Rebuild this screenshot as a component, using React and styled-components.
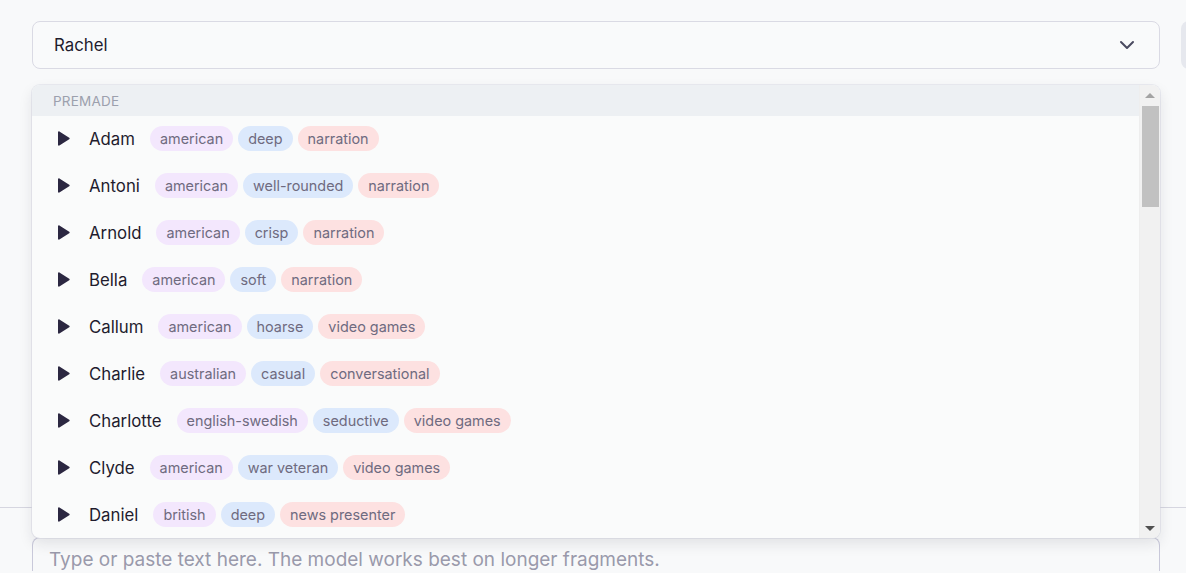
import React from 'react';
import styled, { createGlobalStyle } from 'styled-components';

const voices = [
  { name: 'Adam', tags: ['american', 'deep', 'narration'] },
  { name: 'Antoni', tags: ['american', 'well-rounded', 'narration'] },
  { name: 'Arnold', tags: ['american', 'crisp', 'narration'] },
  { name: 'Bella', tags: ['american', 'soft', 'narration'] },
  { name: 'Callum', tags: ['american', 'hoarse', 'video games'] },
  { name: 'Charlie', tags: ['australian', 'casual', 'conversational'] },
  { name: 'Charlotte', tags: ['english-swedish', 'seductive', 'video games'] },
  { name: 'Clyde', tags: ['american', 'war veteran', 'video games'] },
  { name: 'Daniel', tags: ['british', 'deep', 'news presenter'] },
  { name: 'Dave', tags: ['british-essex', 'conversational', 'video games'] },
];

const tagTones = ['accent', 'trait', 'use'];

const Global = createGlobalStyle`
  html, body { margin: 0; padding: 0; }
  body {
    background: #f8f9fa;
    font-family: Inter, "Noto Sans", sans-serif;
    color: #1f1c2e;
    overflow: hidden;
  }
`;

const Page = styled.div`
  position: relative;
  width: 1186px;
  height: 573px;
  overflow: hidden;
`;

const TopRow = styled.div`
  display: flex;
  gap: 21px;
  padding: 21px 0 0 32px;
`;

const Select = styled.div`
  flex: 0 0 1128px;
  box-sizing: border-box;
  height: 48px;
  display: flex;
  align-items: center;
  justify-content: space-between;
  padding: 0 24px 0 21px;
  border: 1px solid #dadae4;
  border-radius: 8px;
  background: #f9fafb;
  font-size: 16.8px;
  color: #1f1c2e;
`;

const SideButton = styled.div`
  flex: 0 0 60px;
  height: 48px;
  border-radius: 8px;
  background: #e6e8ee;
`;

const Settings = styled.div`
  height: 438px;
`;

const Divider = styled.div`
  border-top: 1px solid #d6d6e0;
`;

const Editor = styled.div`
  margin: 29px 0 0 32px;
  width: 1128px;
  box-sizing: border-box;
  height: 34px;
  padding: 10px 16px 0;
  border: 1px solid #c9c9da;
  border-bottom: none;
  border-radius: 8px 8px 0 0;
  font-size: 19px;
  line-height: 23px;
  color: #9a9aab;
  white-space: nowrap;
`;

const Menu = styled.div`
  position: absolute;
  top: 85px;
  left: 32px;
  width: 1128px;
  height: 453px;
  display: flex;
  border-radius: 8px;
  overflow: hidden;
  background: #fafbfb;
  box-shadow: 0 6px 14px rgba(30, 30, 50, 0.10), 0 0 0 1px rgba(220, 222, 232, 0.5);
`;

const List = styled.div`
  flex: 1;
  display: flex;
  flex-direction: column;
  overflow: hidden;
`;

const GroupLabel = styled.div`
  flex: 0 0 31px;
  display: flex;
  align-items: center;
  padding-left: 21px;
  background: #edf0f3;
  font-size: 13.5px;
  letter-spacing: 0.2px;
  color: #9ca0ad;
  text-transform: uppercase;
`;

const Row = styled.div`
  flex: 0 0 47px;
  display: flex;
  align-items: center;
  padding-left: 25px;
  margin-top: -1px;
  margin-bottom: 1px;
`;

const Play = styled.svg`
  width: 13px;
  height: 15px;
  margin-right: 19px;
  flex-shrink: 0;
`;

const Name = styled.span`
  font-size: 16.8px;
  color: #1f1c2e;
  margin-right: 15px;
`;

const Tags = styled.div`
  display: flex;
  gap: 5px;
`;

const pillColors = {
  accent: '#f3e7fd',
  trait: '#dce9fc',
  use: '#fde1e1',
};

const Pill = styled.span`
  height: 25px;
  display: inline-flex;
  align-items: center;
  padding: 0 10px;
  border-radius: 13px;
  font-size: 14.4px;
  color: #6f6b80;
  background: ${(p) => pillColors[p.$tone]};
`;

const Scrollbar = styled.div`
  flex: 0 0 20px;
  display: flex;
  flex-direction: column;
  align-items: center;
  background: #f1f1f1;
  border-left: 1px solid #eeeeee;
`;

const Arrow = styled.div`
  flex: 0 0 20px;
  display: flex;
  align-items: center;
  justify-content: center;
  &::before {
    content: '';
    border-left: 5px solid transparent;
    border-right: 5px solid transparent;
    ${(p) => (p.$down
      ? 'border-top: 5px solid #505050;'
      : 'border-bottom: 5px solid #a3a3a3;')}
  }
`;

const Track = styled.div`
  flex: 1;
  width: 100%;
  display: flex;
  justify-content: center;
`;

const Thumb = styled.div`
  width: 17px;
  height: 101px;
  margin-top: 1px;
  background: #c1c1c1;
`;

const Chevron = () => (
  <svg width="16" height="10" viewBox="0 0 16 10" fill="none">
    <path d="M2 2l6 6 6-6" stroke="#4a4a60" strokeWidth="2" strokeLinecap="round" strokeLinejoin="round" />
  </svg>
);

const PlayIcon = () => (
  <Play viewBox="0 0 13 15">
    <path d="M1 1.2c0-.8.8-1.2 1.4-.8l9.8 6.3c.6.4.6 1.2 0 1.6l-9.8 6.3c-.6.4-1.4 0-1.4-.8z" fill="#2b2741" />
  </Play>
);

const VoiceRow = ({ voice }) => (
  <Row>
    <PlayIcon />
    <Name>{voice.name}</Name>
    <Tags>
      {voice.tags.map((tag, i) => (
        <Pill key={tag} $tone={tagTones[i]}>{tag}</Pill>
      ))}
    </Tags>
  </Row>
);

const App = () => (
  <Page>
    <Global />
    <TopRow>
      <Select>
        <span>Rachel</span>
        <Chevron />
      </Select>
      <SideButton />
    </TopRow>
    <Settings />
    <Divider />
    <Editor>Type or paste text here. The model works best on longer fragments.</Editor>

    <Menu>
      <List>
        <GroupLabel>Premade</GroupLabel>
        {voices.map((voice) => (
          <VoiceRow key={voice.name} voice={voice} />
        ))}
      </List>
      <Scrollbar>
        <Arrow />
        <Track>
          <Thumb />
        </Track>
        <Arrow $down />
      </Scrollbar>
    </Menu>
  </Page>
);

export default App;
